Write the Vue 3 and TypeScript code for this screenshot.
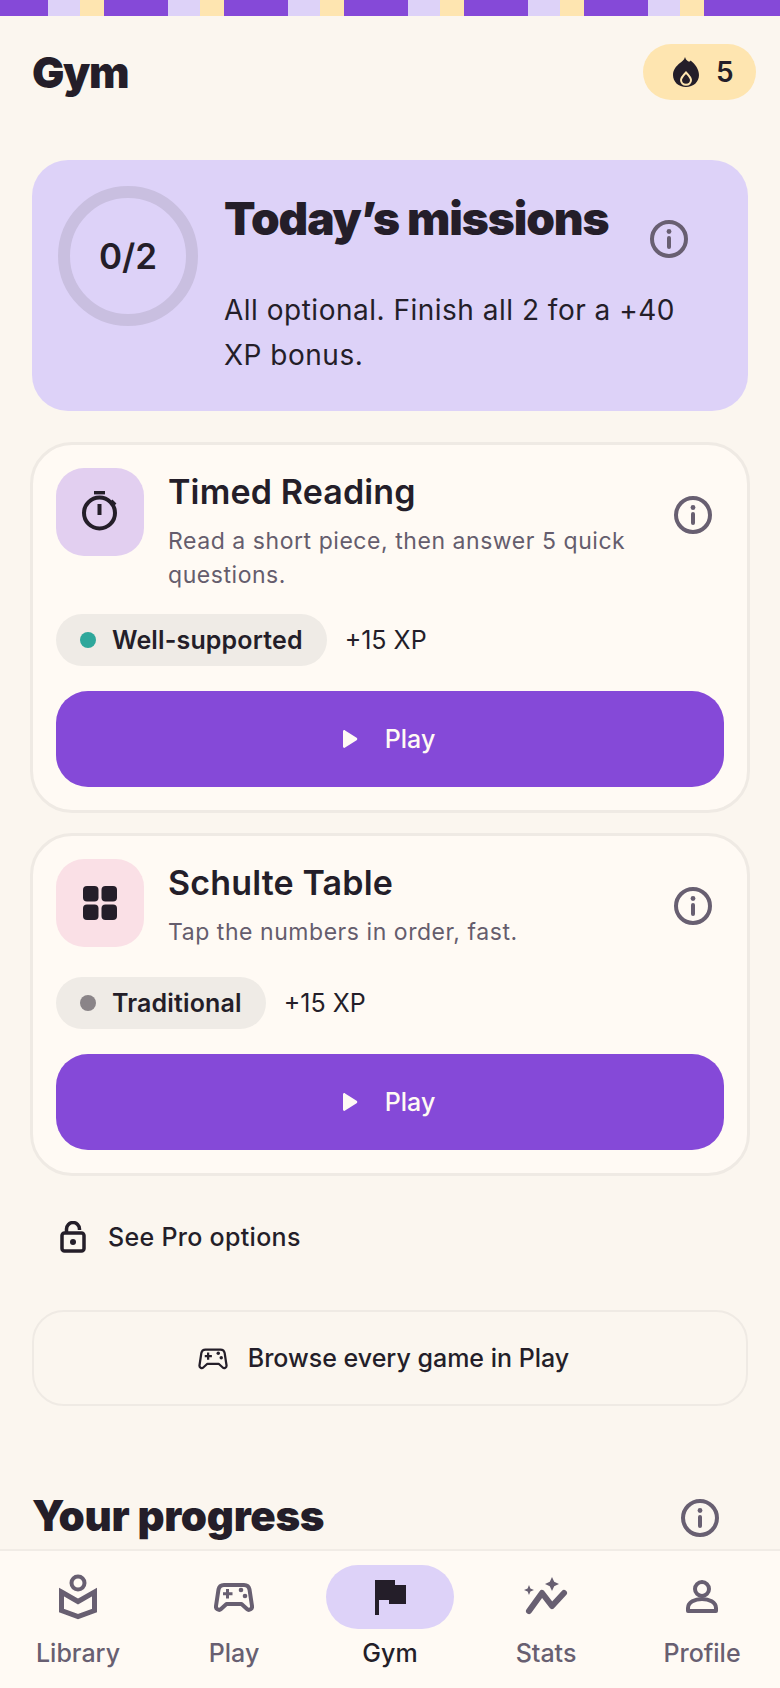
<script setup lang="ts">
interface Mission {
  title: string
  desc: string
  tag: string
  dot: string
  tone: string
  icon: 'timer' | 'grid'
}

const missions: Mission[] = [
  {
    title: 'Timed Reading',
    desc: 'Read a short piece, then answer 5 quick questions.',
    tag: 'Well-supported',
    dot: '#2ea79b',
    tone: 'lilac',
    icon: 'timer',
  },
  {
    title: 'Schulte Table',
    desc: 'Tap the numbers in order, fast.',
    tag: 'Traditional',
    dot: '#8a8488',
    tone: 'pink',
    icon: 'grid',
  },
]

const tabs = ['Library', 'Play', 'Gym', 'Stats', 'Profile']
</script>

<template>
  <div class="screen">
    <div class="stripe"></div>
    <main class="content">
      <header class="top">
        <h1 class="page-title">Gym</h1>
        <div class="streak">
          <svg class="flame" viewBox="0 0 26 30" aria-hidden="true">
            <path class="flame-body" d="M12 0c.6 2.300 1.800 3.400 3 4.300.8.600 2 .4 2.600-.9C22.300 7.200 26 12.300 26 18c0 7-5.600 12-13 12S0 25 0 18C0 12.600 3.400 9.300 6.300 6.600 8.600 4.500 11.300 3.300 12 0z" />
            <path class="flame-core" d="M13 15.500c-2.800 2.900-5 5.200-5 7.500 0 2.800 2.200 4.700 5 4.700s5-1.900 5-4.700c0-2.300-2.200-4.600-5-7.500z" />
          </svg>
          <span>5</span>
        </div>
      </header>

      <section class="hero">
        <div class="ring"><span>0/2</span></div>
        <div class="hero-body">
          <div class="hero-head">
            <h2 class="hero-title">Today’s missions</h2>
            <svg class="info hero-info" viewBox="0 0 40 40" aria-hidden="true">
              <circle cx="20" cy="20" r="17" />
              <path d="M20 19v9" />
              <circle class="info-dot" cx="20" cy="12.5" r="2.4" />
            </svg>
          </div>
          <p class="hero-text">All optional. Finish all 2 for a +40 XP bonus.</p>
        </div>
      </section>

      <article v-for="m in missions" :key="m.title" class="card">
        <div class="card-top">
          <div class="tile" :class="m.tone">
            <svg v-if="m.icon === 'timer'" class="tile-icon" viewBox="0 0 44 44" aria-hidden="true">
              <path class="ink-fill" d="M16 1h11v3.400H16z" />
              <circle class="ink-line" cx="21.500" cy="23" r="15.500" />
              <path class="ink-line" d="M21.500 14v11M33 11l4 4" />
            </svg>
            <svg v-else class="tile-icon" viewBox="0 0 44 44" aria-hidden="true">
              <rect class="ink-fill" x="5" y="5" width="15.500" height="15.500" rx="4" />
              <rect class="ink-fill" x="23.500" y="5" width="15.500" height="15.500" rx="4" />
              <rect class="ink-fill" x="5" y="23.500" width="15.500" height="15.500" rx="4" />
              <rect class="ink-fill" x="23.500" y="23.500" width="15.500" height="15.500" rx="4" />
            </svg>
          </div>
          <div class="card-copy">
            <h3 class="card-title">{{ m.title }}</h3>
            <p class="card-desc">{{ m.desc }}</p>
          </div>
          <svg class="info card-info" viewBox="0 0 40 40" aria-hidden="true">
            <circle cx="20" cy="20" r="17" />
            <path d="M20 19v9" />
            <circle class="info-dot" cx="20" cy="12.5" r="2.4" />
          </svg>
        </div>
        <div class="meta">
          <span class="tag"><i class="dot" :style="{ background: m.dot }"></i>{{ m.tag }}</span>
          <span class="xp">+15 XP</span>
        </div>
        <button class="play" type="button">
          <svg class="play-icon" viewBox="0 0 18 20" aria-hidden="true">
            <path d="M2 2.500c0-1.200 1.200-1.800 2.100-1.100l11.500 7.300c.9.600.9 1.900 0 2.500L4.100 18.600c-.9.700-2.100.1-2.100-1.100z" />
          </svg>
          <span>Play</span>
        </button>
      </article>

      <div class="pro">
        <svg class="pro-icon" viewBox="0 0 26 32" aria-hidden="true">
          <path class="ink-line thin" d="M6.500 11V8a6.500 6.500 0 0 1 13 0v1" />
          <rect class="ink-line thin" x="2" y="12" width="22" height="18" rx="2.500" />
          <circle class="ink-fill" cx="13" cy="21" r="3" />
        </svg>
        <span>See Pro options</span>
      </div>

      <button class="browse" type="button">
        <svg class="browse-icon" viewBox="0 0 40 30" aria-hidden="true">
          <path class="ink-line pad" d="M10 3h20c3 0 5 2 5.500 4.500L38 24c.5 3-3 5-5 3l-5.500-5h-15L7 27c-2 2-5.500 0-5-3L4.500 7.500C5 5 7 3 10 3z" />
          <path class="ink-line pad" d="M13.500 7v9.500M9 11.700h9.500" />
          <circle class="ink-fill" cx="27" cy="8" r="2.300" />
          <circle class="ink-fill" cx="31" cy="14" r="2.300" />
        </svg>
        <span>Browse every game in Play</span>
      </button>

      <div class="progress-head">
        <h2 class="progress-title">Your progress</h2>
        <svg class="info progress-info" viewBox="0 0 40 40" aria-hidden="true">
          <circle cx="20" cy="20" r="17" />
          <path d="M20 19v9" />
          <circle class="info-dot" cx="20" cy="12.5" r="2.4" />
        </svg>
      </div>
    </main>

    <nav class="nav">
      <div v-for="t in tabs" :key="t" class="tab" :class="{ active: t === 'Gym' }">
        <div class="tab-icon">
          <svg v-if="t === 'Library'" class="ic-tall" viewBox="0 0 40 48" aria-hidden="true">
            <circle class="line" cx="20" cy="10" r="6.500" />
            <path class="line thick" d="M3.500 19l16.500 9.500L36.500 19v18.500L20 43.500 3.500 37.500z" />
          </svg>
          <svg v-else-if="t === 'Play'" class="ic-wide" viewBox="0 0 40 30" aria-hidden="true">
            <path class="line" d="M10 3h20c3 0 5 2 5.500 4.500L38 24c.5 3-3 5-5 3l-5.500-5h-15L7 27c-2 2-5.500 0-5-3L4.500 7.500C5 5 7 3 10 3z" />
            <path class="line slim" d="M13.500 7v9.500M9 11.700h9.500" />
            <circle class="fill" cx="27" cy="8" r="2.300" />
            <circle class="fill" cx="31" cy="14" r="2.300" />
          </svg>
          <svg v-else-if="t === 'Gym'" class="ic-flag" viewBox="0 0 31 35" aria-hidden="true">
            <path class="fill" d="M0 0h20v5h11v19H14v-4H4v15H0z" />
          </svg>
          <svg v-else-if="t === 'Stats'" class="ic-square" viewBox="0 0 44 44" aria-hidden="true">
            <path class="line wide" d="M5 36l13-18 10 13 12-13" />
            <path class="fill" d="M28 2l2.200 4.800L35 9l-4.800 2.200L28 16l-2.200-4.800L21 9l4.800-2.200zM5 10l1.400 3.600L10 15l-3.600 1.400L5 20l-1.400-3.600L0 15l3.600-1.400z" />
          </svg>
          <svg v-else class="ic-tall" viewBox="0 0 40 48" aria-hidden="true">
            <circle class="line" cx="20" cy="16" r="7" />
            <path class="line" d="M6 38v-3c0-6 7-9 14-9s14 3 14 9v3z" />
          </svg>
        </div>
        <span class="tab-label">{{ t }}</span>
      </div>
    </nav>
  </div>
</template>

<style>
html,
body {
  margin: 0;
  background: #fbf6ef;
}
</style>

<style scoped>
.screen {
  width: 780px;
  height: 1688px;
  display: flex;
  flex-direction: column;
  overflow: hidden;
  background: #fbf6ef;
  color: #241e29;
  font-family: Inter, "Noto Sans", sans-serif;
}

.stripe {
  flex: none;
  height: 16px;
  background: repeating-linear-gradient(
    90deg,
    #8549d8 0 64px,
    #ddd2f8 64px 96px,
    #fee5b0 96px 120px
  );
  background-position: -16px 0;
}

.content {
  flex: 1;
  min-height: 0;
  overflow: hidden;
  padding: 28px 32px 0;
}

.top {
  display: flex;
  align-items: center;
  justify-content: space-between;
  height: 56px;
}

.page-title,
.hero-title,
.progress-title {
  margin: 0;
  font-weight: 900;
}

.page-title {
  font-size: 43px;
  letter-spacing: -1.4px;
}

.streak {
  display: flex;
  align-items: center;
  gap: 17px;
  width: 113px;
  height: 56px;
  box-sizing: border-box;
  padding-left: 30px;
  margin-right: -8px;
  border-radius: 28px;
  background: #fee5b0;
  font-size: 28px;
  font-weight: 600;
}

.flame {
  width: 26px;
  height: 30px;
}

.flame-body {
  fill: #241e29;
}

.flame-core {
  fill: #241e29;
  stroke: #fee5b0;
  stroke-width: 2;
}

.hero {
  display: flex;
  gap: 26px;
  height: 251px;
  box-sizing: border-box;
  margin-top: 60px;
  padding: 26px;
  border-radius: 36px;
  background: #ddd2f8;
}

.ring {
  flex: none;
  width: 140px;
  height: 140px;
  box-sizing: border-box;
  display: flex;
  align-items: center;
  justify-content: center;
  border: 12px solid #c9bfe0;
  border-radius: 50%;
  font-size: 35px;
  font-weight: 600;
}

.hero-body {
  flex: 1;
  min-width: 0;
}

.hero-head {
  display: flex;
  align-items: flex-start;
  justify-content: space-between;
  padding-right: 33px;
}

.hero-title {
  margin-top: 2px;
  font-size: 46px;
  line-height: 60px;
  letter-spacing: -1.1px;
  white-space: nowrap;
}

.hero-info {
  margin-top: 33px;
}

.hero-text {
  max-width: 470px;
  margin: 29px 0 0;
  font-size: 28px;
  line-height: 45px;
  letter-spacing: 0.5px;
}

.info {
  flex: none;
  width: 40px;
  height: 40px;
  fill: none;
  stroke: #685f71;
  stroke-width: 4;
  stroke-linecap: round;
}

.info-dot {
  fill: #685f71;
  stroke: none;
}

.card {
  box-sizing: border-box;
  margin: 31px -2px 0;
  padding: 23px 23px;
  border: 3px solid #efeae4;
  border-radius: 42px;
  background: #fffaf4;
}

.card + .card {
  margin-top: 20px;
}

.card-top {
  display: flex;
  gap: 24px;
}

.tile {
  flex: none;
  width: 88px;
  height: 88px;
  display: flex;
  align-items: center;
  justify-content: center;
  border-radius: 28px;
}

.tile.lilac {
  background: #e2cff0;
}

.tile.pink {
  background: #fae0e6;
}

.tile-icon {
  width: 44px;
  height: 44px;
}

.ink-fill {
  fill: #241e29;
}

.ink-line {
  fill: none;
  stroke: #241e29;
  stroke-width: 4;
}

.ink-line.thin {
  stroke-width: 3.5;
}

.ink-line.pad {
  stroke-width: 3;
  stroke-linejoin: round;
}

.card-copy {
  flex: 1;
  min-width: 0;
  padding-top: 1px;
}

.card-title {
  margin: 0;
  font-size: 34px;
  font-weight: 600;
  line-height: 46px;
  letter-spacing: 0.15px;
}

.card-desc {
  margin: 9px 0 -8px;
  font-size: 23px;
  line-height: 34px;
  color: #655d6d;
  letter-spacing: 0.55px;
}

.card-info {
  margin: 27px 11px 0 0;
}

.meta {
  display: flex;
  align-items: center;
  gap: 18px;
  margin-top: 30px;
  font-size: 25px;
}

.tag {
  display: flex;
  align-items: center;
  gap: 16px;
  height: 52px;
  padding: 0 24px;
  border-radius: 26px;
  background: #efebe6;
  font-size: 25px;
  font-weight: 600;
  letter-spacing: 0.15px;
}

.dot {
  width: 16px;
  height: 16px;
  border-radius: 50%;
}

.play {
  width: 100%;
  height: 96px;
  margin-top: 25px;
  display: flex;
  align-items: center;
  justify-content: center;
  gap: 26px;
  box-sizing: border-box;
  padding: 0 4px 0 0;
  border: 0;
  border-radius: 32px;
  background: #8549d8;
  color: #fffaf4;
  font: 500 25px Inter, sans-serif;
}

.play-icon {
  width: 18px;
  height: 20px;
  fill: #fffaf4;
}

.pro {
  display: flex;
  align-items: center;
  gap: 22px;
  margin-top: 45px;
  padding-left: 28px;
  font-size: 25px;
  font-weight: 500;
  letter-spacing: 0.3px;
}

.pro-icon {
  width: 26px;
  height: 32px;
}

.browse {
  width: 100%;
  height: 96px;
  margin-top: 57px;
  display: flex;
  align-items: center;
  justify-content: center;
  gap: 20px;
  box-sizing: border-box;
  padding: 0 13px 0 0;
  border: 2px solid #efeae4;
  border-radius: 32px;
  background: transparent;
  color: #241e29;
  font: 500 25px Inter, sans-serif;
}

.browse-icon {
  width: 30px;
  height: 23px;
}

.progress-head {
  display: flex;
  align-items: center;
  justify-content: space-between;
  margin-top: 88px;
  padding-right: 28px;
}

.progress-title {
  font-size: 42px;
  line-height: 44px;
  letter-spacing: -0.3px;
}

.progress-info {
  margin-top: 4px;
}

.nav {
  flex: none;
  height: 139px;
  display: grid;
  grid-template-columns: repeat(5, 1fr);
  box-sizing: border-box;
  border-top: 2px solid #f1ece6;
  background: #fffaf4;
}

.tab {
  display: flex;
  flex-direction: column;
  align-items: center;
  padding-top: 14px;
  color: #685f71;
}

.tab.active {
  color: #241e29;
}

.tab-icon {
  width: 128px;
  height: 64px;
  display: flex;
  align-items: center;
  justify-content: center;
  border-radius: 32px;
}

.tab.active .tab-icon {
  background: #ddd2f8;
}

.ic-tall {
  width: 40px;
  height: 48px;
}

.ic-wide {
  width: 40px;
  height: 30px;
}

.ic-flag {
  width: 31px;
  height: 35px;
}

.ic-square {
  width: 44px;
  height: 44px;
}

.tab-icon .line {
  fill: none;
  stroke: currentColor;
  stroke-width: 4;
  stroke-linejoin: round;
}

.tab-icon .line.thick {
  stroke-width: 5;
  stroke-linejoin: miter;
}

.tab-icon .line.slim {
  stroke-width: 3;
}

.tab-icon .line.wide {
  stroke-width: 6;
  stroke-linecap: round;
}

.tab-icon .fill {
  fill: currentColor;
}

.tab-label {
  margin-top: 8px;
  font-size: 25px;
  line-height: 32px;
  font-weight: 500;
}
</style>
